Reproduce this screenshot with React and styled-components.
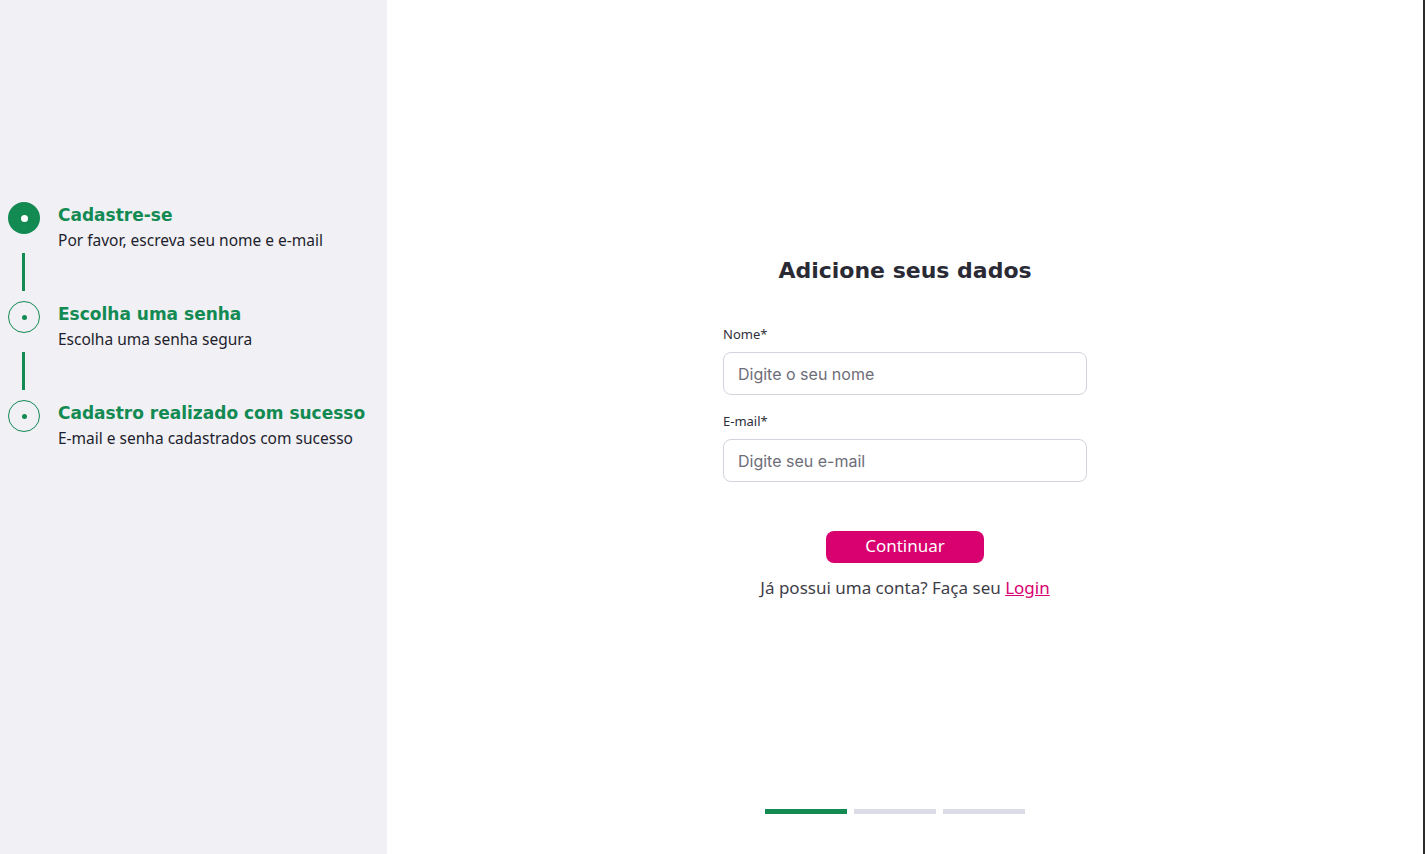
import React from "react";
import styled, { createGlobalStyle } from "styled-components";

const GlobalStyle = createGlobalStyle`
  html, body {
    margin: 0;
    padding: 0;
    height: 100%;
  }
  body {
    font-family: "Noto Sans", "Lato", sans-serif;
    background: #fff;
  }
  #root {
    height: 100%;
  }
`;

const GREEN = "#128a52";
const PINK = "#d9006f";
const HEADING = `"DejaVu Sans", "Open Sans", sans-serif`;

const Page = styled.div`
  display: flex;
  height: 854px;
  overflow: hidden;
`;

const Sidebar = styled.aside`
  width: 387px;
  flex-shrink: 0;
  background: #f0f0f5;
  box-sizing: border-box;
  padding: 202px 0 0 8px;
`;

const Step = styled.div`
  display: grid;
  grid-template-columns: 32px 1fr;
  column-gap: 18px;
`;

const Marker = styled.div`
  display: flex;
  flex-direction: column;
  align-items: center;
`;

const Circle = styled.div`
  width: 32px;
  height: 32px;
  box-sizing: border-box;
  border-radius: 50%;
  display: flex;
  align-items: center;
  justify-content: center;
  background: ${({ $active }) => ($active ? GREEN : "transparent")};
  border: ${({ $active }) => ($active ? "none" : `1.5px solid ${GREEN}`)};

  &::after {
    content: "";
    width: ${({ $active }) => ($active ? 7 : 5)}px;
    height: ${({ $active }) => ($active ? 7 : 5)}px;
    border-radius: 50%;
    background: ${({ $active }) => ($active ? "#fff" : GREEN)};
  }
`;

const Connector = styled.div`
  width: 3px;
  height: 38px;
  margin: 19px 0 10px;
  margin-left: -2px;
  background: ${GREEN};
`;

const StepText = styled.div`
  padding-top: 2px;
`;

const StepTitle = styled.div`
  font-family: ${HEADING};
  font-weight: 700;
  font-size: 17px;
  line-height: 22px;
  color: ${GREEN};
`;

const StepDesc = styled.div`
  margin-top: 4px;
  font-size: 15.5px;
  line-height: 20px;
  color: #1e1e2d;
`;

const Main = styled.main`
  flex: 1;
  display: flex;
  flex-direction: column;
  align-items: center;
  border-right: 2px solid #2b2b2b;
  padding-top: 257px;
  padding-bottom: 40px;
`;

const Form = styled.form`
  width: 364px;
  display: flex;
  flex-direction: column;
`;

const Title = styled.h1`
  margin: 0 0 41px;
  text-align: center;
  font-family: ${HEADING};
  font-weight: 700;
  font-size: 22px;
  line-height: 28px;
  color: #2a2a35;
`;

const Label = styled.label`
  font-size: 13px;
  line-height: 16px;
  color: #2f2f3a;
  margin-bottom: 10px;
`;

const Input = styled.input`
  height: 43px;
  box-sizing: border-box;
  border: 1px solid #d3d3dc;
  border-radius: 8px;
  padding: 0 14px;
  font-family: "Inter", "Noto Sans", sans-serif;
  font-size: 16px;
  color: #333;
  margin-bottom: ${({ $mb }) => $mb}px;
  outline: none;

  &::placeholder {
    color: #6d6d78;
  }
`;

const Button = styled.button`
  align-self: center;
  width: 158px;
  height: 32px;
  margin-top: 1px;
  padding: 0 0 3px;
  border: none;
  border-radius: 8px;
  background: ${PINK};
  color: #fff;
  font-family: "Noto Sans", "Lato", sans-serif;
  font-size: 17px;
  cursor: pointer;
`;

const Footnote = styled.p`
  margin: 14px 0 0;
  text-align: center;
  font-size: 17px;
  line-height: 22px;
  color: #3e3e48;
`;

const LoginLink = styled.a`
  color: ${PINK};
  text-decoration: underline;
`;

const Progress = styled.div`
  margin-top: auto;
  margin-right: 20px;
  display: flex;
  gap: 7px;
`;

const Bar = styled.div`
  width: 82px;
  height: 5px;
  background: ${({ $done }) => ($done ? GREEN : "#dcdce6")};
`;

const steps = [
  { title: "Cadastre-se", desc: "Por favor, escreva seu nome e e-mail" },
  { title: "Escolha uma senha", desc: "Escolha uma senha segura" },
  {
    title: "Cadastro realizado com sucesso",
    desc: "E-mail e senha cadastrados com sucesso",
  },
];

const App = () => {
  return (
    <>
      <GlobalStyle />
      <Page>
        <Sidebar>
          {steps.map((s, i) => (
            <Step key={s.title}>
              <Marker>
                <Circle $active={i === 0} />
                {i < steps.length - 1 && <Connector />}
              </Marker>
              <StepText>
                <StepTitle>{s.title}</StepTitle>
                <StepDesc>{s.desc}</StepDesc>
              </StepText>
            </Step>
          ))}
        </Sidebar>
        <Main>
          <Form onSubmit={(e) => e.preventDefault()}>
            <Title>Adicione seus dados</Title>
            <Label htmlFor="nome">Nome*</Label>
            <Input id="nome" placeholder="Digite o seu nome" $mb={18} />
            <Label htmlFor="email">E-mail*</Label>
            <Input id="email" placeholder="Digite seu e-mail" $mb={48} />
            <Button type="submit">Continuar</Button>
            <Footnote>
              Já possui uma conta? Faça seu <LoginLink href="#">Login</LoginLink>
            </Footnote>
          </Form>
          <Progress>
            <Bar $done />
            <Bar />
            <Bar />
          </Progress>
        </Main>
      </Page>
    </>
  );
};

export default App;
